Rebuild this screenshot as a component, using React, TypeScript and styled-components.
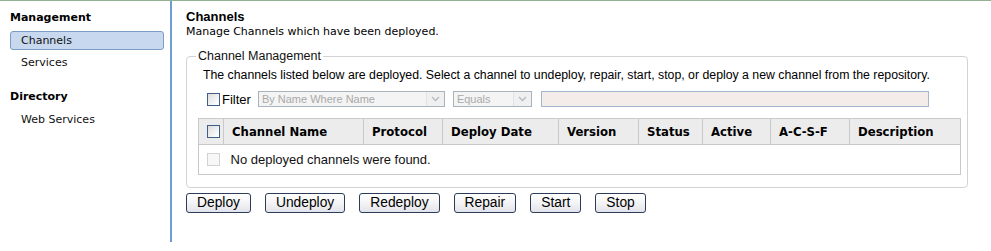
import React from "react";
import styled, { createGlobalStyle } from "styled-components";

const GlobalStyle = createGlobalStyle`
  html, body {
    margin: 0;
    padding: 0;
    background: #ffffff;
  }
  body {
    font-family: "Liberation Sans", Arial, sans-serif;
    color: #000000;
  }
`;

// Structure générale
const Page = styled.div`
  border-top: 1px solid #93b293;
  display: flex;
  height: 241px;
`;

const Sidebar = styled.nav`
  width: 172px;
  flex-shrink: 0;
  border-right: 2px solid #6f9dd3;
  padding-top: 9px;
  box-sizing: border-box;
  font-family: "DejaVu Sans", Verdana, sans-serif;
  font-size: 11px;
`;

const SectionTitle = styled.div`
  font-weight: bold;
  padding-left: 10px;
  height: 15px;
  line-height: 15px;
  margin-bottom: 6px;
`;

const NavItem = styled.div<{ $selected?: boolean }>`
  margin: 0 6px 3px 10px;
  height: 19px;
  line-height: 17px;
  padding-left: 10px;
  box-sizing: border-box;
  border: 1px solid ${({ $selected }) => ($selected ? "#7d9cc4" : "transparent")};
  border-radius: 3px;
  background: ${({ $selected }) => ($selected ? "#c8d9ef" : "transparent")};
  color: #111;
`;

const SidebarGap = styled.div`
  height: 14px;
`;

const Main = styled.main`
  flex: 1;
  padding: 8px 24px 0 14px;
  box-sizing: border-box;
`;

const Heading = styled.h1`
  margin: 0;
  font-size: 13px;
  font-weight: bold;
  line-height: 15px;
`;

const Subheading = styled.div`
  font-family: "DejaVu Sans", Verdana, sans-serif;
  font-size: 11px;
  line-height: 15px;
  margin-bottom: 10px;
`;

// Cadre "Channel Management"
const Fieldset = styled.fieldset`
  margin: 0;
  padding: 5px 6px 12px 11px;
  border: 1px solid #d3d3d3;
  border-radius: 4px;
  min-width: 0;
`;

const Legend = styled.legend`
  padding: 0 2px;
  margin-left: -2px;
  font-size: 12.5px;
  line-height: 14px;
  color: #111;
`;

const Description = styled.p`
  margin: 0 0 8px 5px;
  font-size: 12.3px;
  line-height: 15px;
  white-space: nowrap;
`;

const FilterRow = styled.div`
  display: flex;
  align-items: center;
  height: 16px;
  margin-bottom: 11px;
  padding-left: 9px;
`;

const Checkbox = styled.span<{ $disabled?: boolean }>`
  display: inline-block;
  width: 13px;
  height: 13px;
  box-sizing: border-box;
  border: 1px solid ${({ $disabled }) => ($disabled ? "#d2d2d2" : "#3f5f86")};
  background: ${({ $disabled }) =>
    $disabled ? "#f7f7f7" : "linear-gradient(135deg, #dcdcdc 0%, #ffffff 90%)"};
  flex-shrink: 0;
`;

const FilterLabel = styled.span`
  font-size: 13px;
  margin: 0 7px 0 2px;
`;

const SelectBox = styled.div<{ $width: number }>`
  width: ${({ $width }) => $width}px;
  height: 16px;
  box-sizing: border-box;
  border: 1px solid #a8b3c0;
  background: #f4f4f4;
  display: flex;
  align-items: center;
  margin-right: 8px;
  font-size: 11px;
  color: #a9a9a9;
`;

const SelectText = styled.span`
  flex: 1;
  padding-left: 3px;
  white-space: nowrap;
  overflow: hidden;
`;

const SelectArrow = styled.span`
  width: 17px;
  height: 14px;
  display: flex;
  align-items: center;
  justify-content: center;
  border-left: 1px solid #e2e2e2;
  background: #f0f0f0;
`;

const TextInput = styled.div`
  width: 388px;
  height: 16px;
  box-sizing: border-box;
  border: 1px solid #a3b6cd;
  background: #f3ece8;
  margin-left: 1px;
`;

// Tableau des canaux
const Table = styled.table`
  width: 762px;
  border-collapse: collapse;
  table-layout: fixed;
  border: 1px solid #c9c9c9;
`;

const HeaderCell = styled.th<{ $width: number }>`
  width: ${({ $width }) => $width}px;
  height: 26px;
  padding: 0 0 0 8px;
  box-sizing: border-box;
  text-align: left;
  background: #ececec;
  border: 1px solid #c9c9c9;
  font-family: "DejaVu Sans", Verdana, sans-serif;
  font-size: 11.7px;
  font-weight: bold;
  white-space: nowrap;
  vertical-align: middle;
`;

const BodyCell = styled.td<{ $pad?: number }>`
  height: 30px;
  padding: 0 0 0 ${({ $pad }) => $pad ?? 8}px;
  box-sizing: border-box;
  vertical-align: middle;
  font-size: 13px;
  color: #111;
  white-space: nowrap;
  border-bottom: 1px solid #c9c9c9;
`;

const CheckCell = styled.div`
  display: flex;
  align-items: center;
`;

const ButtonRow = styled.div`
  display: flex;
  gap: 14px;
  margin-top: 5px;
`;

const ActionButton = styled.button`
  height: 20px;
  padding: 0 10px;
  font-family: "Liberation Sans", Arial, sans-serif;
  font-size: 13.8px;
  line-height: 18px;
  color: #000;
  border: 1px solid #2b3d58;
  border-radius: 3px;
  background: linear-gradient(#ffffff 0%, #f4f4f6 50%, #e2e3e9 100%);
  cursor: pointer;
`;

const columns = [
  { label: "Channel Name", width: 140 },
  { label: "Protocol", width: 79 },
  { label: "Deploy Date", width: 116 },
  { label: "Version", width: 80 },
  { label: "Status", width: 64 },
  { label: "Active", width: 68 },
  { label: "A-C-S-F", width: 79 },
  { label: "Description", width: 111 },
];

const actions = ["Deploy", "Undeploy", "Redeploy", "Repair", "Start", "Stop"];

function Chevron() {
  return (
    <svg width="9" height="6" viewBox="0 0 9 6">
      <path d="M1 1 L4.5 4.5 L8 1" fill="none" stroke="#b3b9c2" strokeWidth="1.3" />
    </svg>
  );
}

export default function App() {
  return (
    <>
      <GlobalStyle />
      <Page>
        <Sidebar>
          <SectionTitle>Management</SectionTitle>
          <NavItem $selected>Channels</NavItem>
          <NavItem>Services</NavItem>
          <SidebarGap />
          <SectionTitle>Directory</SectionTitle>
          <NavItem>Web Services</NavItem>
        </Sidebar>

        <Main>
          <Heading>Channels</Heading>
          <Subheading>Manage Channels which have been deployed.</Subheading>

          <Fieldset>
            <Legend>Channel Management</Legend>
            <Description>
              The channels listed below are deployed. Select a channel to undeploy, repair,
              start, stop, or deploy a new channel from the repository.
            </Description>

            <FilterRow>
              <Checkbox />
              <FilterLabel>Filter</FilterLabel>
              <SelectBox $width={187}>
                <SelectText>By Name Where Name</SelectText>
                <SelectArrow>
                  <Chevron />
                </SelectArrow>
              </SelectBox>
              <SelectBox $width={79}>
                <SelectText>Equals</SelectText>
                <SelectArrow>
                  <Chevron />
                </SelectArrow>
              </SelectBox>
              <TextInput />
            </FilterRow>

            <Table>
              <thead>
                <tr>
                  <HeaderCell $width={25}>
                    <CheckCell>
                      <Checkbox />
                    </CheckCell>
                  </HeaderCell>
                  {columns.map((c) => (
                    <HeaderCell key={c.label} $width={c.width}>
                      {c.label}
                    </HeaderCell>
                  ))}
                </tr>
              </thead>
              <tbody>
                <tr>
                  <BodyCell>
                    <CheckCell>
                      <Checkbox $disabled />
                    </CheckCell>
                  </BodyCell>
                  <BodyCell $pad={7} colSpan={8}>
                    No deployed channels were found.
                  </BodyCell>
                </tr>
              </tbody>
            </Table>
          </Fieldset>

          <ButtonRow>
            {actions.map((a) => (
              <ActionButton key={a} type="button">
                {a}
              </ActionButton>
            ))}
          </ButtonRow>
        </Main>
      </Page>
    </>
  );
}
